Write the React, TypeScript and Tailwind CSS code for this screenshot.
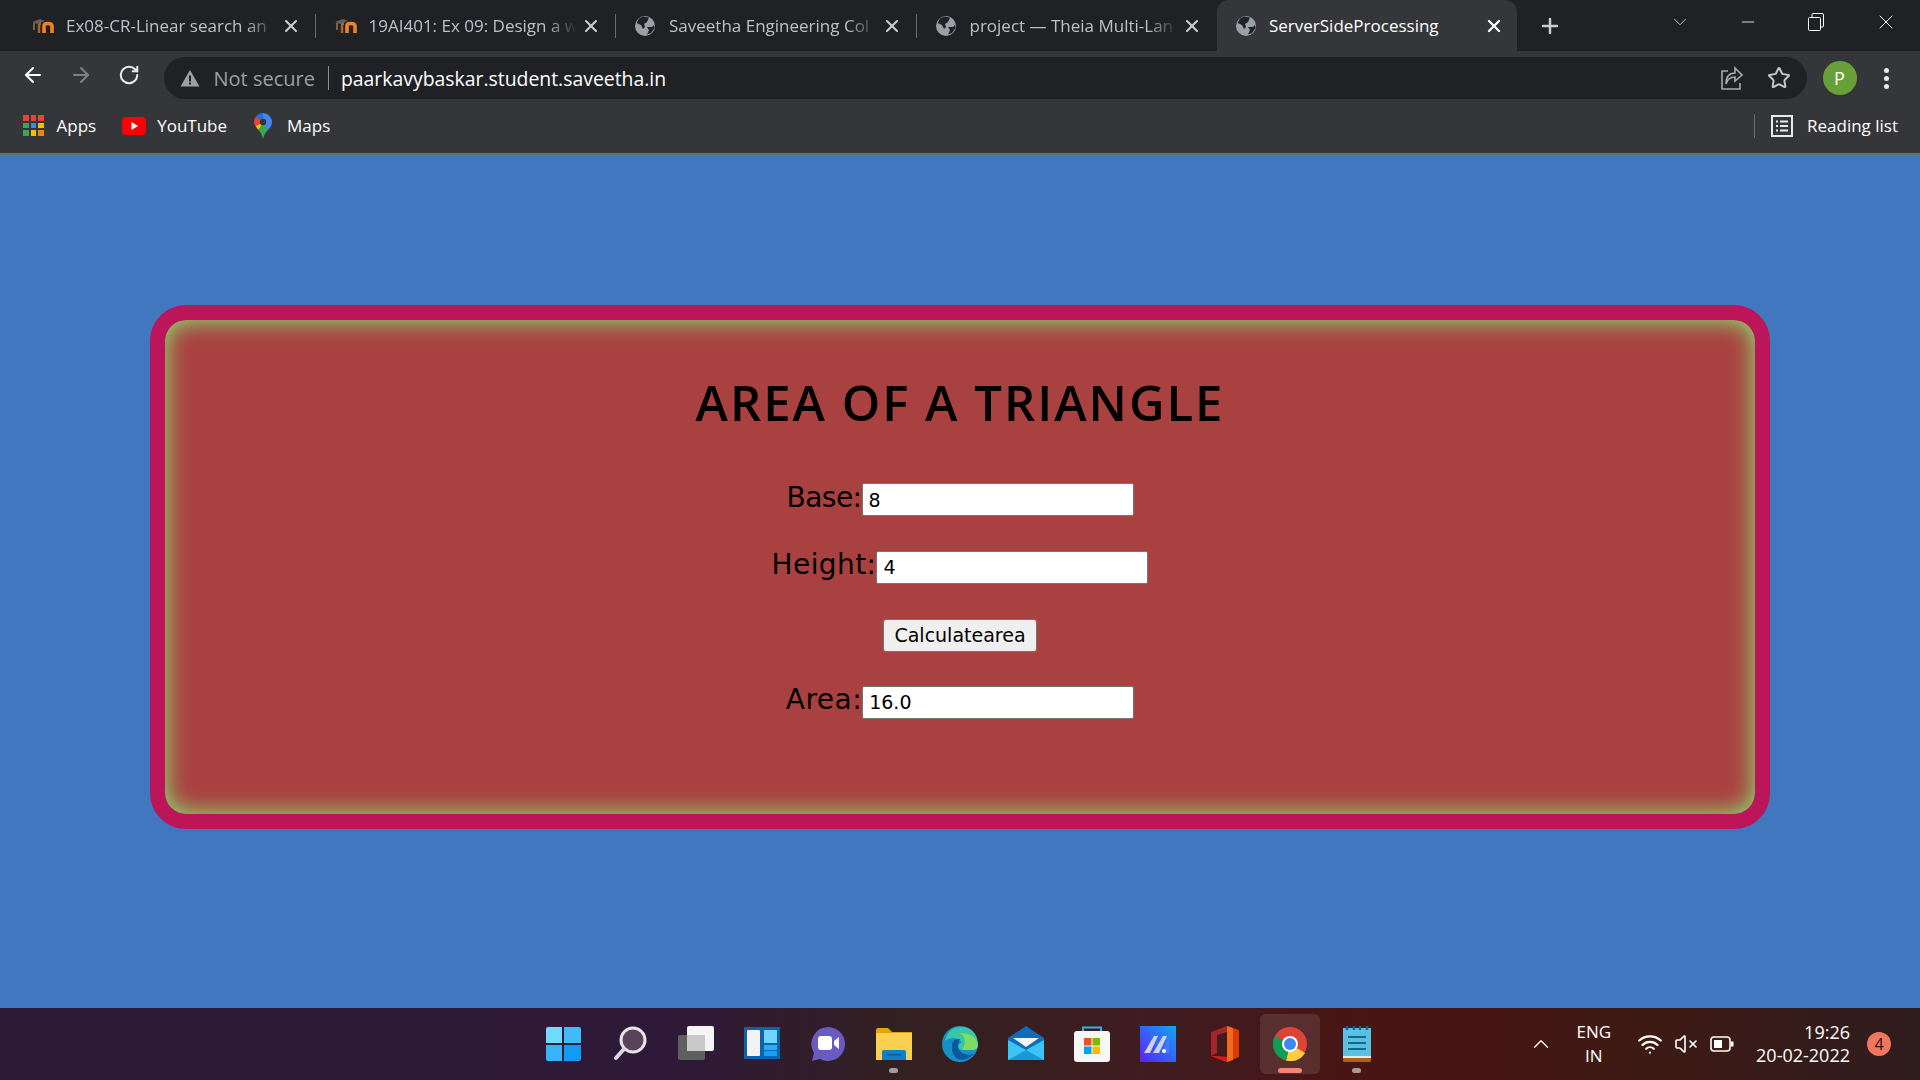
import React, { FC } from "react";
import { ArrowLeft, ArrowRight, RotateCw, Star, X, Plus, ChevronDown, ChevronUp, Minus, Wifi, VolumeX } from "lucide-react";

const Moodle: FC = () => (
  <svg width="24" height="20" viewBox="0 0 24 20" className="shrink-0">
    <path d="M1 6 L9 3 L14 5 L6 8 Z" fill="#5f5f5f" />
    <path d="M3 7 V14" stroke="#8a7a6a" strokeWidth="1.5" />
    <path d="M8 17 V10 Q8 7.5 10 7.5" fill="none" stroke="#a8642a" strokeWidth="2.5" />
    <path d="M13 17 V10 Q13 7.5 16.5 7.5 Q21 7.5 21 10 V17" fill="none" stroke="#f58220" strokeWidth="3.6" />
  </svg>
);

const Globe: FC = () => (
  <svg width="22" height="22" viewBox="0 0 22 22" className="shrink-0">
    <circle cx="11" cy="11" r="10" fill="#9aa0a6" />
    <path d="M9 1.5 L5 3.5 L2.5 8 L7 10 L9 14 L11 12 L10 9 L13 7 L15 2.5 Z" fill="#202124" />
    <path d="M13 12 L18 12 L20 10 L20.5 13 L17 18 L13 19.5 L15 15 Z" fill="#202124" />
  </svg>
);

const tabs = [
  { title: "Ex08-CR-Linear search an", icon: "m", sep: true },
  { title: "19AI401: Ex 09: Design a w", icon: "m", sep: true },
  { title: "Saveetha Engineering Col", icon: "g", sep: true },
  { title: "project — Theia Multi-Lan", icon: "g", sep: false },
];

const Tab: FC<{ title: string; icon: string; sep: boolean }> = ({ title, icon, sep }) => (
  <div className="relative flex h-full w-[300.5px] items-center pl-[18px] pr-[15px] first:w-[302.5px]">
    {icon === "m" ? <Moodle /> : <Globe />}
    <span className={`flex-1 overflow-hidden whitespace-nowrap text-[17px] text-[#bdc1c6] [mask-image:linear-gradient(to_right,black_85%,transparent)] ${icon === "m" ? "ml-[11px]" : "ml-[13px]"}`}>
      {title}
    </span>
    <X size={20} strokeWidth={2.5} className="ml-[4px] shrink-0 text-[#c9cccf]" />
    {sep && <div className="absolute right-0 top-[14px] h-[24px] w-px bg-[#6a6c70]" />}
  </div>
);

const BrowserBar: FC = () => (
  <div className="font-['Open_Sans',sans-serif]">
    <div className="flex h-[51px] bg-[#202124] pl-[13px]">
      {tabs.map((t) => (
        <Tab key={t.title} {...t} />
      ))}
      <div className="flex h-full w-[300px] items-center rounded-t-[12px] bg-[#35363a] pl-[18px] pr-[13px]">
        <Globe />
        <span className="ml-[12px] flex-1 whitespace-nowrap text-[17px] text-white">ServerSideProcessing</span>
        <X size={20} strokeWidth={2.8} className="text-white" />
      </div>
      <Plus size={24} strokeWidth={2.5} className="ml-[21px] mt-[14px] text-[#c9cccf]" />
      <div className="ml-auto flex items-start text-white">
        <ChevronDown size={22} strokeWidth={1} className="mr-[47px] mt-[11px] text-[#d5d5d5]" />
        <Minus size={20} strokeWidth={1} className="mr-[50px] mt-[12px]" />
        <svg width="16" height="18" viewBox="0 0 16 18" fill="none" stroke="white" className="mr-[50px] mt-[13px]">
          <rect x="0.5" y="4.5" width="12" height="13" rx="1" />
          <path d="M4 4 V1.5 Q4 0.5 5 0.5 H14 Q15.5 0.5 15.5 2 V13 Q15.5 14 14 14 H13" />
        </svg>
        <X size={24} strokeWidth={1} className="mr-[22px] mt-[10px]" />
      </div>
    </div>

    <div className="flex h-[51px] items-start bg-[#35363a] pl-[21px] pt-[6px]">
      <ArrowLeft size={24} strokeWidth={2} className="mt-[6px] text-white" />
      <ArrowRight size={24} strokeWidth={2} className="ml-[24px] mt-[6px] text-[#7e8184]" />
      <RotateCw size={22} strokeWidth={2.2} className="ml-[25px] mt-[7px] text-[#e8eaed]" />
      <div className="ml-[23.5px] flex h-[42px] w-[1643px] items-center rounded-full bg-[#202124] pl-[16px] pr-[14px]">
        <svg width="20" height="18" viewBox="0 0 20 18" className="shrink-0">
          <path d="M10 1 L19.5 17.5 H0.5 Z" fill="#9aa0a6" />
          <rect x="9" y="6.5" width="2" height="6" fill="#202124" />
          <rect x="9" y="13.5" width="2" height="2" fill="#202124" />
        </svg>
        <span className="ml-[14px] mt-[1px] whitespace-nowrap text-[20px] text-[#9aa0a6]">Not secure</span>
        <div className="ml-[13px] h-[24px] w-px bg-[#8a8d90]" />
        <span className="ml-[12px] mt-[1px] whitespace-nowrap text-[19.4px] text-white">paarkavybaskar.student.saveetha.in</span>
        <svg width="24" height="26" viewBox="0 0 24 26" fill="none" stroke="#a8abae" strokeWidth="1.6" className="ml-auto mr-[23px]">
          <path d="M8 6 H2 V24 H20 V18" />
          <path d="M15 3 L22 10 L15 16 V12 Q8 12 6 19 Q6 8 15 8 Z" />
        </svg>
        <Star size={24} strokeWidth={2} className="mr-[2px] text-[#c4c6c9]" />
      </div>
      <div className="ml-[16px] mt-[4px] flex h-[34px] w-[34px] items-center justify-center rounded-full bg-[#689f38] text-[18px] text-white">
        P
      </div>
      <div className="ml-[27.5px] mt-[11px] flex flex-col gap-[3px]">
        <div className="h-[5px] w-[5px] rounded-full bg-[#e8eaed]" />
        <div className="h-[5px] w-[5px] rounded-full bg-[#e8eaed]" />
        <div className="h-[5px] w-[5px] rounded-full bg-[#e8eaed]" />
      </div>
    </div>

    <div className="flex h-[53px] items-center border-b-2 border-[#6b6c6f] bg-[#35363a] pb-[4px] pl-[23px] text-[17px] text-white">
      <div className="grid grid-cols-3 gap-[2px]">
        {["#ea4335", "#ea4335", "#ea4335", "#34a853", "#4285f4", "#fbbc05", "#34a853", "#fbbc05", "#fa7b17"].map((c, i) => (
          <div key={i} className="h-[5.5px] w-[5.5px]" style={{ backgroundColor: c }} />
        ))}
      </div>
      <span className="ml-[13px]">Apps</span>
      <svg width="24" height="18" viewBox="0 0 24 18" className="ml-[26px]">
        <rect width="24" height="18" rx="4" fill="#f00" />
        <path d="M9.5 5 L16 9 L9.5 13 Z" fill="#fff" />
      </svg>
      <span className="ml-[11px]">YouTube</span>
      <svg width="18" height="26" viewBox="0 0 18 26" className="ml-[27px]">
        <path d="M9 0 A9 9 0 0 1 18 9 Q18 13 14 17 L9 12 Z" fill="#4285f4" />
        <path d="M9 0 A9 9 0 0 0 2 3.5 L9 9 Z" fill="#1a73e8" />
        <path d="M2 3.5 A9 9 0 0 0 0 9 Q0 11 1.5 13 L9 9 Z" fill="#ea4335" />
        <path d="M1.5 13 Q3 15.5 4.5 17 L12 8 Z" fill="#fbbc05" />
        <path d="M4.5 17 Q7.5 20 9 26 Q10.5 20 14 17 L9 9 Z" fill="#34a853" />
        <circle cx="9" cy="9" r="3.2" fill="#35363a" />
      </svg>
      <span className="ml-[15px]">Maps</span>
      <div className="ml-auto h-[24px] w-px bg-[#6b6c6f]" />
      <svg width="22" height="22" viewBox="0 0 22 22" fill="none" stroke="#e8eaed" strokeWidth="2" className="ml-[16px]">
        <rect x="1" y="1" width="20" height="20" />
        <path d="M5 6.5 H7 M9 6.5 H17 M5 11 H7 M9 11 H17 M5 15.5 H7 M9 15.5 H17" />
      </svg>
      <span className="ml-[14px] mr-[22px] whitespace-nowrap">Reading list</span>
    </div>
  </div>
);

const Field: FC<{ label: string; value: string; labelClass: string }> = ({ label, value, labelClass }) => (
  <div className="flex h-[33px] items-baseline justify-center">
    <label className={`text-[28px] leading-[30px] text-black ${labelClass}`}>{label}</label>
    <input
      readOnly
      value={value}
      className="h-[33px] w-[272px] rounded-[2px] border border-[#767676] bg-white px-[6px] text-[19px] text-black outline-none"
    />
  </div>
);

const TriangleForm: FC = () => (
  <div className="mx-[150px] my-[150px] rounded-[36px] border-[15px] border-[#bc155a] bg-[#a94141] pb-[96px] pt-[56px] font-['DejaVu_Sans',sans-serif] shadow-[inset_0_0_24px_#85f578]">
    <h1 className="text-center font-['Open_Sans',sans-serif] text-[49px] font-semibold leading-[52px] tracking-[2px] text-black">
      AREA OF A TRIANGLE
    </h1>
    <div className="mt-[54.5px] flex flex-col items-center gap-[34.5px]">
      <Field label="Base:" value="8" labelClass="tracking-[-0.5px]" />
      <Field label="Height:" value="4" labelClass="tracking-[0.4px]" />
      <button className="mt-[1px] -mb-[1px] h-[33px] w-[154px] rounded-[3px] border border-[#767676] bg-[#efefef] text-[19px] text-black">
        Calculatearea
      </button>
      <Field label="Area:" value="16.0" labelClass="tracking-[0.5px]" />
    </div>
  </div>
);

const TaskIcon: FC<{ children: React.ReactNode; dot?: boolean; active?: boolean }> = ({ children, dot, active }) => (
  <div className="relative flex h-[60px] w-[66.1px] items-center justify-center">
    {active && <div className="absolute h-[60px] w-[60px] rounded-[6px] bg-white/10" />}
    <div className="relative flex items-center justify-center">{children}</div>
    {dot && <div className="absolute bottom-[1px] h-[5px] w-[9px] rounded-full bg-[#a89a9a]" />}
    {active && <div className="absolute bottom-[1px] h-[5px] w-[24px] rounded-full bg-[#f1856f]" />}
  </div>
);

const Taskbar: FC = () => (
  <div className="relative flex h-[72px] items-center justify-center bg-[linear-gradient(90deg,#2c1a36_0%,#2e1a38_35%,#33201f_48%,#3f1c20_60%,#4a1414_72%,#3f1a14_85%,#2e1c1e_100%)] font-['Open_Sans',sans-serif] text-white">
    <div className="flex">
      <TaskIcon>
        <div className="grid grid-cols-2 gap-[2px]">
          <div className="h-[16px] w-[16.5px] rounded-tl-[2px] bg-[#6fdcff]" />
          <div className="h-[16px] w-[16.5px] rounded-tr-[2px] bg-[#3fbcf8]" />
          <div className="h-[16px] w-[16.5px] rounded-bl-[2px] bg-[#37b4f5]" />
          <div className="h-[16px] w-[16.5px] rounded-br-[2px] bg-[#129bf5]" />
        </div>
      </TaskIcon>
      <TaskIcon>
        <svg width="34" height="36" viewBox="0 0 34 36" fill="none">
          <circle cx="20" cy="14" r="12" fill="#5a4258" stroke="#e6e6e6" strokeWidth="3" />
          <path d="M11 23 L3 32" stroke="#d8d8d8" strokeWidth="4" strokeLinecap="round" />
        </svg>
      </TaskIcon>
      <TaskIcon>
        <svg width="36" height="36" viewBox="0 0 36 36">
          <rect x="0" y="9" width="27" height="25" rx="2" fill="#5f5f5f" />
          <rect x="9" y="0" width="27" height="25" rx="2" fill="#f5f5f5" />
          <rect x="9" y="9" width="18" height="16" fill="#c9c9c9" />
        </svg>
      </TaskIcon>
      <TaskIcon>
        <svg width="36" height="34" viewBox="0 0 36 34">
          <rect width="36" height="32" fill="#0a64ad" />
          <rect x="3" y="3" width="13" height="26" rx="1" fill="#f3f3f3" />
          <rect x="20" y="3" width="13" height="13" fill="#6fd4ff" />
          <rect x="20" y="18" width="13" height="5" fill="#29aef5" />
          <rect x="20" y="24" width="13" height="5" fill="#1a9cf0" />
        </svg>
      </TaskIcon>
      <TaskIcon>
        <svg width="36" height="36" viewBox="0 0 36 36">
          <path d="M18 1 A17 17 0 1 1 10 33 L2 35 L4 27 A17 17 0 0 1 18 1 Z" fill="#6a5bc4" />
          <rect x="8" y="10" width="14" height="14" rx="3" fill="#fff" />
          <path d="M24 15 L29 11 V23 L24 19 Z" fill="#fff" />
        </svg>
      </TaskIcon>
      <TaskIcon dot>
        <svg width="36" height="32" viewBox="0 0 36 32">
          <path d="M0 2 Q0 0 2 0 H12 L16 4 H36 V32 H0 Z" fill="#e5a50a" />
          <rect y="5" width="36" height="27" fill="#fbcf4f" />
          <path d="M6 32 V24 Q6 22 8 22 H28 Q30 22 30 24 V32 Z" fill="#0f7fcb" />
          <rect x="11" y="26" width="14" height="1.5" fill="#0a5a95" />
        </svg>
      </TaskIcon>
      <TaskIcon>
        <svg width="36" height="36" viewBox="0 0 36 36">
          <circle cx="18" cy="18" r="18" fill="#1591c9" />
          <path d="M3 15 Q6 1 19 1 Q34 1 36 18 Q36 24 30 24 H20 Q16 24 16 19 Q24 15 12 12 Q6 12 3 15 Z" fill="#38c6a8" />
          <path d="M18 7 Q32 6 36 18 Q36 24 30 24 H20 Q27 14 18 7 Z" fill="#7fdc60" />
          <path d="M10 20 Q10 12 18 13 Q13 22 20 27 Q26 30 32 28 Q24 36 15 33 Q9 28 10 20 Z" fill="#0c5a9c" />
        </svg>
      </TaskIcon>
      <TaskIcon>
        <svg width="36" height="36" viewBox="0 0 36 36">
          <path d="M0 12 L18 0 L36 12 V34 H0 Z" fill="#0f6cbd" />
          <path d="M5 12 H31 L18 21 Z" fill="#f2f2f2" />
          <path d="M0 14 L18 24 L36 14 V34 H0 Z" fill="#3cc4f5" />
          <path d="M0 34 L18 24 L36 34 Z" fill="#1a98dc" />
        </svg>
      </TaskIcon>
      <TaskIcon>
        <svg width="36" height="36" viewBox="0 0 36 36">
          <path d="M9 6 V1.5 H27 V6" fill="none" stroke="#2db5ea" strokeWidth="2" />
          <rect y="5" width="36" height="31" rx="3" fill="#f6f6f6" />
          <rect x="10" y="12" width="7.5" height="7.5" fill="#f25022" />
          <rect x="18.5" y="12" width="7.5" height="7.5" fill="#7fba00" />
          <rect x="10" y="20.5" width="7.5" height="7.5" fill="#00a4ef" />
          <rect x="18.5" y="20.5" width="7.5" height="7.5" fill="#ffb900" />
        </svg>
      </TaskIcon>
      <TaskIcon>
        <svg width="36" height="36" viewBox="0 0 36 36">
          <defs>
            <linearGradient id="ma" x1="0" y1="1" x2="1" y2="0">
              <stop offset="0" stopColor="#5b21f5" />
              <stop offset="1" stopColor="#12a5f5" />
            </linearGradient>
          </defs>
          <rect width="36" height="36" fill="url(#ma)" />
          <path d="M4 27 L14 10 H18 L10 27 Z M13 27 L23 10 H27 L19 27 Z" fill="#cdd2f5" />
          <path d="M29 8 V27 H23 Z" fill="#3b7df5" />
          <circle cx="24" cy="25" r="2" fill="#fff" />
        </svg>
      </TaskIcon>
      <TaskIcon>
        <svg width="30" height="36" viewBox="0 0 30 36">
          <path d="M18 0 L30 4 V31 L18 36 L2 30 L18 31 Z" fill="#d83b01" />
          <path d="M18 0 L2 6 V30 L8 27 V9 L18 6 Z" fill="#a4262c" />
          <path d="M2 30 L18 36 V31 Z" fill="#e81123" />
          <path d="M18 0 V36 L24 34 V2 Z" fill="#eb6c1c" />
        </svg>
      </TaskIcon>
      <TaskIcon active>
        <svg width="34" height="34" viewBox="0 0 34 34">
          <circle cx="17" cy="17" r="17" fill="#db4437" />
          <path d="M17 17 L32 26 A17 17 0 0 1 13 33.5 Z" fill="#ffcd40" />
          <path d="M17 17 L13 33.5 A17 17 0 0 1 2 9 Z" fill="#0f9d58" />
          <circle cx="17" cy="17" r="8" fill="#fff" />
          <circle cx="17" cy="17" r="6" fill="#4285f4" />
        </svg>
      </TaskIcon>
      <TaskIcon dot>
        <svg width="28" height="36" viewBox="0 0 28 36">
          <rect y="2" width="28" height="30" fill="#5cc1e0" />
          <rect y="30" width="28" height="6" rx="1" fill="#b45d14" />
          <rect y="30" width="28" height="2" fill="#e8e8e8" />
          <path d="M4 0 V4 M11 0 V4 M17 0 V4 M24 0 V4" stroke="#0c6a8f" strokeWidth="2.5" />
          <path d="M5 11 H23 M5 17 H23 M5 23 H23" stroke="#0c6a8f" strokeWidth="2" />
        </svg>
      </TaskIcon>
    </div>
    <div className="absolute right-0 top-0 flex h-full items-center text-[16px]">
      <ChevronUp size={26} strokeWidth={1.2} className="mr-[22px]" />
      <div className="mr-[26px] flex flex-col items-center text-[17px] leading-[24px]">
        <span>ENG</span>
        <span>IN</span>
      </div>
      <Wifi size={26} strokeWidth={2} className="mr-[11px]" />
      <VolumeX size={24} strokeWidth={1.6} className="mr-[12px]" />
      <svg width="24" height="16" viewBox="0 0 24 16" fill="none" className="mr-[22px]">
        <rect x="1" y="1" width="19" height="14" rx="3" stroke="white" strokeWidth="1.6" />
        <rect x="4" y="4" width="8" height="8" fill="white" />
        <rect x="21" y="5.5" width="2.5" height="5" fill="white" />
      </svg>
      <div className="flex flex-col items-end text-[18px] leading-[23px]">
        <span>19:26</span>
        <span>20-02-2022</span>
      </div>
      <div className="ml-[17px] mr-[29px] flex h-[24px] w-[24px] items-center justify-center rounded-full bg-[#f1765e] text-[16px] text-[#2a1512]">
        4
      </div>
    </div>
  </div>
);

const App: FC = () => (
  <div className="flex h-screen w-full flex-col overflow-hidden bg-[#4177bf]">
    <BrowserBar />
    <div className="flex-1 overflow-hidden">
      <TriangleForm />
    </div>
    <Taskbar />
  </div>
);

export default App;
